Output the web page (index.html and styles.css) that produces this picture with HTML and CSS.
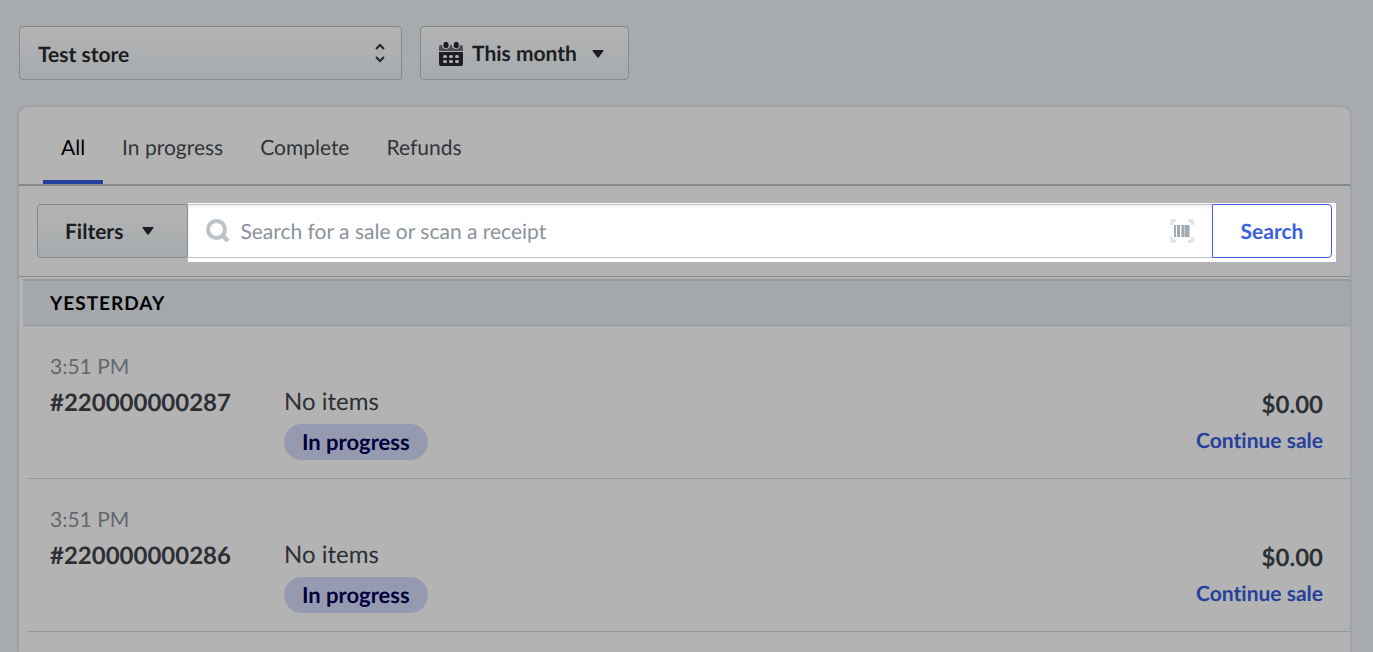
FILE: index.html
```html
<!DOCTYPE html>
<html lang="en">
<head>
    <meta charset="UTF-8">
    <meta name="viewport" content="width=device-width, initial-scale=1.0">
    <title>Sales history</title>
    <link rel="stylesheet" href="styles.css">
</head>
<body>
    <!-- Store and date pickers -->
    <div class="toolbar">
        <div class="store-picker">
            <select class="control store-select" aria-label="Store">
                <option>Test store</option>
            </select>
            <svg class="store-arrows" width="12" height="20" viewBox="0 0 12 20" aria-hidden="true">
                <path d="M2 6 L6 2 L10 6 M2 14 L6 18 L10 14" fill="none" stroke="#24272c" stroke-width="2"/>
            </svg>
        </div>
        <button class="control date-button" type="button">
            <svg width="24" height="24" viewBox="0 0 24 24" aria-hidden="true">
                <path d="M0 9V5q0-2 2-2h1q0 4 4 4t4-4h2q0 4 4 4t4-4h1q2 0 2 2v4z" fill="#4c4e51"/>
                <ellipse cx="7" cy="3" rx="2.6" ry="3.2" fill="#1b1d23"/>
                <ellipse cx="17.3" cy="3" rx="2.6" ry="3.2" fill="#1b1d23"/>
                <path d="M0 10h24v12q0 2-2 2H2q-2 0-2-2z" fill="#1b1d23"/>
                <g fill="#afafb0">
                    <rect x="4" y="13" width="4" height="3" rx="1.500"/>
                    <rect x="10" y="13" width="4" height="3" rx="1.500"/>
                    <rect x="16" y="13" width="4" height="3" rx="1.500"/>
                    <rect x="4" y="18" width="4" height="3" rx="1.500"/>
                    <rect x="10" y="18" width="4" height="3" rx="1.500"/>
                    <rect x="16" y="18" width="4" height="3" rx="1.500"/>
                </g>
            </svg>
            <span>This month</span>
            <svg class="caret" width="12" height="8" viewBox="0 0 12 8" aria-hidden="true"><path d="M1 0h10q1 0 .4 1L7 7q-1 1.400-2 0L.6 1Q0 0 1 0z"/></svg>
        </button>
    </div>

    <main class="panel">
        <nav class="tabs">
            <button class="tab active" type="button">All</button>
            <button class="tab" type="button">In progress</button>
            <button class="tab" type="button">Complete</button>
            <button class="tab" type="button">Refunds</button>
        </nav>

        <!-- Filters and search -->
        <div class="filter-row">
            <button class="control filters-button" type="button">
                <span>Filters</span>
                <svg class="caret" width="12" height="8" viewBox="0 0 12 8" aria-hidden="true"><path d="M1 0h10q1 0 .4 1L7 7q-1 1.400-2 0L.6 1Q0 0 1 0z"/></svg>
            </button>
            <form class="search">
                <div class="search-field">
                    <svg width="24" height="24" viewBox="0 0 24 24" aria-hidden="true">
                        <circle cx="10.500" cy="10.500" r="8.500" fill="none" stroke="#bcc4ca" stroke-width="4"/>
                        <path d="M17 17 L22 22" stroke="#bcc4ca" stroke-width="4.500"/>
                    </svg>
                    <input class="search-input" type="text" aria-label="Search for a sale" placeholder="Search for a sale or scan a receipt">
                    <svg width="24" height="24" viewBox="0 0 24 24" aria-hidden="true">
                        <path d="M0 6V2q0-2 2-2h4v3H5Q3 3 3 5v1zM18 0h4q2 0 2 2v4h-3V5q0-2-2-2h-1zM0 18h3v1q0 2 2 2h1v3H2q-2 0-2-2zM21 18h3v4q0 2-2 2h-4v-3h1q2 0 2-2z" fill="#e1e5e8"/>
                        <path d="M4 6h2v12H4zM7 6h3v12H7zM12 6h2v12h-2zM15 6h4v12h-4z" fill="#a3abb2"/>
                        <path d="M11 6h1v12h-1zM14 6h1v12h-1zM19 6h1v12h-1z" fill="#c9ced2"/>
                    </svg>
                </div>
                <button class="search-button" type="submit">Search</button>
            </form>
        </div>

        <!-- Sales grouped by day -->
        <section class="sales">
            <h2 class="day">Yesterday</h2>
            <ul class="sale-list">
                <li class="sale">
                    <div class="sale-info">
                        <div class="sale-time">3:51 PM</div>
                        <div class="sale-number">#220000000287</div>
                    </div>
                    <div class="sale-items">
                        <div>No items</div>
                        <span class="badge">In progress</span>
                    </div>
                    <div class="sale-total">
                        <div class="amount">$0.00</div>
                        <a class="continue" href="#">Continue sale</a>
                    </div>
                </li>
                <li class="sale">
                    <div class="sale-info">
                        <div class="sale-time">3:51 PM</div>
                        <div class="sale-number">#220000000286</div>
                    </div>
                    <div class="sale-items">
                        <div>No items</div>
                        <span class="badge">In progress</span>
                    </div>
                    <div class="sale-total">
                        <div class="amount">$0.00</div>
                        <a class="continue" href="#">Continue sale</a>
                    </div>
                </li>
            </ul>
        </section>
    </main>
</body>
</html>
```
FILE: styles.css
```css
* {
    box-sizing: border-box;
}

body {
    display: flex;
    flex-direction: column;
    min-height: 100vh;
    margin: 0;
    padding: 26px 23px 0 19px;
    background-color: #a7abae;
    color: #2c2f34;
    font-family: Lato, "Liberation Sans", sans-serif;
    font-size: 21px;
    font-variant-ligatures: none;
    text-rendering: geometricPrecision;
}

button, input, select {
    font-family: inherit;
    font-size: inherit;
    font-variant-ligatures: inherit;
    text-rendering: inherit;
}

button {
    cursor: pointer;
}

/* Pickers */
.toolbar {
    display: flex;
    gap: 18px;
    margin-bottom: 27px;
}

.control {
    height: 54px;
    border: 1px solid #84898d;
    border-radius: 4px;
    background: linear-gradient(#b3b3b3, #a7abae);
    color: #1b1d23;
    font-weight: 700;
}

.store-picker {
    position: relative;
    width: 383px;
}

.store-select {
    appearance: none;
    width: 100%;
    padding: 2px 40px 0 18px;
}

.store-arrows {
    position: absolute;
    top: 17px;
    right: 16px;
    pointer-events: none;
}

.date-button {
    display: flex;
    align-items: center;
    gap: 9px;
    padding: 1px 24px 0 18px;
}

.caret {
    margin-left: 6px;
    fill: #1b1d23;
}

/* Panel */
.panel {
    flex: 1;
    border-radius: 8px 8px 0 0;
    background-color: #b3b3b3;
    box-shadow: 0 0 3px #85888d;
}

.tabs {
    display: flex;
    gap: 1px;
    padding: 0 24px;
    border-bottom: 2px solid #84898e;
}

.tab {
    height: 77px;
    padding: 8px 18px 0;
    border: none;
    border-bottom: 4px solid transparent;
    background: none;
    color: #303339;
}

.tab.active {
    border-color: #233fa0;
    color: #000;
}

/* Filters and search */
.filter-row {
    display: flex;
    padding: 18px;
    border-bottom: 1px solid #84898e;
}

.filters-button {
    display: flex;
    align-items: center;
    gap: 13px;
    padding: 0 33px 0 27px;
}

.search {
    display: flex;
    flex: 1;
    background-color: #fff;
    box-shadow: 0 -1px #fff, 4px -1px #fff, 0 4px #fff, 4px 4px #fff;
}

.search-field {
    display: flex;
    flex: 1;
    align-items: center;
    gap: 10px;
    padding: 0 18px;
    border: solid #bcc2c7;
    border-width: 1px 0;
    box-shadow: inset 0 2px 3px #f0f0f0;
}

.search-input {
    flex: 1;
    min-width: 0;
    padding: 0;
    border: none;
    outline: none;
    background: none;
}

.search-input::placeholder {
    color: #8a939b;
    opacity: 1;
}

.search-button {
    width: 120px;
    border: 1px solid #3860e0;
    border-radius: 0 4px 4px 0;
    background-color: #fff;
    color: #3860e0;
    font-weight: 700;
}

/* Sales */
.sales {
    padding: 2px 0 0 4px;
}

.day {
    height: 47px;
    margin: 0;
    padding: 0 27px;
    border-top: 2px solid #96999c;
    border-bottom: 1px solid #96999c;
    background-color: #a4a8ab;
    color: #000;
    font-size: 19px;
    line-height: 46px;
    letter-spacing: 1px;
    text-transform: uppercase;
}

.sale-list {
    margin: 0 0 0 4px;
    padding: 0;
    list-style: none;
}

.sale {
    display: grid;
    grid-template-columns: 234px 1fr auto;
    padding: 23px 27px 18px 23px;
    border-bottom: 1px solid #96999b;
    font-size: 24px;
    line-height: 36px;
}

.sale-time {
    color: #62676d;
    font-size: 21px;
}

.sale-number, .amount {
    font-weight: 700;
}

.sale-items {
    padding-top: 35px;
}

.badge {
    display: block;
    width: fit-content;
    padding: 0 18px;
    margin-top: 4px;
    border-radius: 18px;
    background-color: #959ab1;
    color: #00003b;
    font-size: 22px;
    font-weight: 700;
}

.sale-total {
    padding-top: 38px;
    text-align: right;
}

.continue {
    display: block;
    color: #25419d;
    font-size: 21px;
    font-weight: 700;
    text-decoration: none;
}
```
